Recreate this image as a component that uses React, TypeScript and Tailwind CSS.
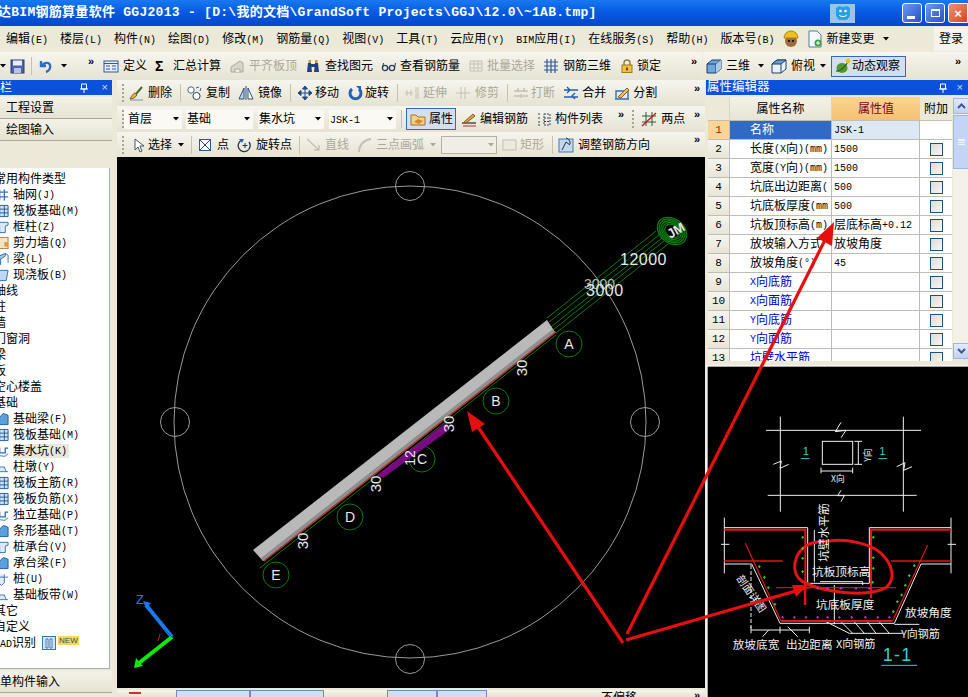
import React from "react";

const FONT = "font-['Liberation_Sans','Noto_Sans_CJK_SC',sans-serif]";

function Txt({ t }: { t: string }) {
  const parts = t.split(/([\x00-\x7f°]+)/).filter(Boolean);
  return (
    <>
      {parts.map((p, i) =>
        /^[\x00-\x7f°]+$/.test(p) ? (
          <span key={i} className="font-['Liberation_Mono',monospace] text-[10px] whitespace-pre">{p}</span>
        ) : (
          <span key={i}>{p}</span>
        )
      )}
    </>
  );
}

const icons: Record<string, React.ReactNode> = {
  save: <><rect x="2" y="2" width="13" height="13" fill="#4a63a8" stroke="#2a3c78" /><rect x="4" y="2.5" width="9" height="5" fill="#e8ecf6" /><rect x="5" y="10" width="7" height="5" fill="#b8c2dc" /></>,
  undo: <path d="M3 3v5h5M4 8c2-4 7-4 8-1s-1 6-4 7" fill="none" stroke="#2f6cc8" strokeWidth="2.4" />,
  define: <><rect x="1" y="3" width="14" height="11" fill="#e8eef8" stroke="#2a5a9c" /><path d="M1 5.5h14M3 8h4M3 11h4M9 8h4M9 11h4" stroke="#2a5a9c" /></>,
  align: <><path d="M2 14V9l9-6 3 2v9z" fill="#d8d6c8" stroke="#aca899" /><path d="M6 14v-3h5v3" fill="#efeee6" stroke="#aca899" /></>,
  bino: <><path d="M2 14l1-9h3l1 9zM9 14l1-9h3l1 9z" fill="#23407e" /><rect x="6" y="6" width="4" height="3" fill="#23407e" /><rect x="3.5" y="2" width="2.5" height="3" fill="#c89a30" /><rect x="10" y="2" width="2.5" height="3" fill="#c89a30" /></>,
  glass: <><circle cx="4" cy="10" r="2.6" fill="none" stroke="#2a3c58" strokeWidth="1.3" /><circle cx="11" cy="10" r="2.6" fill="none" stroke="#2a3c58" strokeWidth="1.3" /><path d="M6.5 10h2M1.5 10l1-5M13.5 10l1-5" stroke="#2a3c58" /></>,
  batch: <path d="M2 3h12v10H2zM2 6h12M2 10h12M6 3v10M10 3v10" fill="#eeece2" stroke="#c4c1b0" />,
  rebar: <path d="M1 4h14M1 8h14M1 12h14M4 1v14M8 1v14M12 1v14" stroke="#2b5aa0" strokeWidth="1.2" fill="none" />,
  lock: <><path d="M5 7V5a3 3 0 016 0v2" fill="none" stroke="#8a7a50" strokeWidth="1.4" /><rect x="3" y="7" width="10" height="7.5" fill="#f0c040" stroke="#a07818" /><rect x="7" y="9.5" width="2" height="3" fill="#80501a" /></>,
  cube: <><path d="M1 6l5-4h9v9l-5 4H1z" fill="#6fa8d8" stroke="#1e3e6c" /><path d="M1 6h9v9M10 6l5-4" fill="none" stroke="#1e3e6c" /><path d="M10 6l5-4v9l-5 4z" fill="#a8cce8" /></>,
  cube2: <><path d="M1 6l5-4h9v9l-5 4H1z" fill="#e8f0f8" stroke="#1e3e6c" /><path d="M1 6l5-4h9l-5 4z" fill="#6aa0d0" stroke="#1e3e6c" /><path d="M10 6v9" stroke="#1e3e6c" /></>,
  orbit: <><ellipse cx="7" cy="10" rx="5.5" ry="5" fill="#4c9a30" /><path d="M1 13c4 1 10-5 13-11" stroke="#2a5a18" fill="none" strokeWidth="1.2" /><circle cx="13" cy="3" r="2.4" fill="#e8c030" /></>,
  broom: <><path d="M2 14c2-4 4-6 5-6l2 2c-1 2-4 4-7 4z" fill="#e8b030" stroke="#786020" /><path d="M8 9l6-7" stroke="#486a28" strokeWidth="2" /><path d="M2 15h13" stroke="#7890b8" /></>,
  copy: <><circle cx="5" cy="5" r="3.2" fill="#fff" stroke="#567" /><circle cx="10.5" cy="11" r="3.6" fill="#fff" stroke="#345" /><path d="M10 3l3-1M14 6l1-3" stroke="#2860a0" /></>,
  mirror: <><path d="M1 14L6 3v11z" fill="#bcd4ec" stroke="#25507c" /><path d="M15 14L10 3v11z" fill="#fff" stroke="#25507c" /><path d="M8 1v14" stroke="#25507c" /></>,
  move: <path d="M8 1v14M1 8h14M8 1L5.5 4h5zM8 15l-2.5-3h5zM1 8l3-2.5v5zM15 8l-3-2.5v5z" fill="#234a80" stroke="#234a80" />,
  rotate: <><path d="M12 4a5.5 5.5 0 11-7 0" fill="none" stroke="#2460c0" strokeWidth="3" /><path d="M9 1h5v5z" fill="#2460c0" /></>,
  extend: <path d="M1 8h8M3 5v6M7 5v6M12 2v12M14 2v12" stroke="#c4c1b0" fill="none" />,
  trim: <path d="M1 8h14M6 2v12M10 2v12" stroke="#c4c1b0" fill="none" />,
  brk: <path d="M1 6h14M1 11h14M5 3v4M11 3v4M8 9v4" stroke="#c4c1b0" strokeWidth="1.4" fill="none" />,
  merge: <path d="M1 5h14M1 12h14M4 2l3 3-3 3M12 8l-3 3 3 3" stroke="#2060b0" strokeWidth="1.4" fill="none" />,
  split: <><path d="M1 14h14M2 14V6h12v8" stroke="#3070b8" strokeWidth="1.4" fill="none" /><path d="M4 12L13 3l2 2-8 8z" fill="#e8c070" stroke="#806020" /></>,
  attr: <><path d="M1 4h5l2 2h7v8H1z" fill="#f0d48c" stroke="#a07030" /><path d="M4 11l4-3 5 2-4 3z" fill="#d88820" /></>,
  pen: <><path d="M1 12h14" stroke="#000" /><path d="M3 11l9-8 2 2-9 7z" fill="#e0a040" stroke="#806020" /><path d="M2 15h13" stroke="#b03030" /></>,
  list: <path d="M2 3h3M2 7h3M2 11h3M2 14h3M8 3h6v11H8zM8 7h6M8 10.5h6" stroke="#345" fill="none" strokeDasharray="2 1" />,
  two: <><path d="M5 1v14M11 1v14" stroke="#2a5a40" /><path d="M1 5h14M1 11h14" stroke="#2a5a40" /><path d="M1 15L15 2" stroke="#c02020" strokeWidth="1.4" /></>,
  cursor: <path d="M5 2v11l3-3 2 5 2-1-2-5h4z" fill="#fff" stroke="#456" />,
  point: <><rect x="2.5" y="2.5" width="11" height="11" fill="#fff" stroke="#2a5a9c" /><path d="M3 3l10 10M13 3L3 13" stroke="#345" /></>,
  rotpt: <><path d="M12 5a6 6 0 11-7-2" fill="none" stroke="#234" strokeWidth="1.3" /><path d="M2 2l5 0-2 4z" fill="#2460c0" /><path d="M8 6v5M5.5 8.5h5" stroke="#234" /></>,
  line: <path d="M1 2l12 11M13 8v5H8" stroke="#c4c1b0" strokeWidth="1.4" fill="none" />,
  arc: <path d="M2 15C2 8 7 3 14 2" stroke="#c4c1b0" strokeWidth="2" fill="none" />,
  rect: <rect x="1" y="3" width="13" height="10" fill="#eceadf" stroke="#c4c1b0" />,
  adjust: <><rect x="1" y="2" width="14" height="13" fill="#c4d8ec" stroke="#4878a8" /><path d="M4 13l4-8 4 3" stroke="#234" fill="none" /><path d="M8 1a5 5 0 014 6" stroke="#234" fill="none" /></>,
};

function Ico({ n, className = "" }: { n: string; className?: string }) {
  return (
    <svg width="16" height="16" viewBox="0 0 16 16" className={"shrink-0 " + className}>
      {icons[n]}
    </svg>
  );
}

function Arrow({ grey }: { grey?: boolean }) {
  return (
    <svg width="6" height="4" viewBox="0 0 6 4" className="shrink-0">
      <path d="M0 0h6L3 3.5z" fill={grey ? "#aca899" : "#000"} />
    </svg>
  );
}

function Tool({ n, t, grey, className = "", gap = "gap-[4px]" }: { n: string; t: string; grey?: boolean; className?: string; gap?: string }) {
  return (
    <div className={"flex items-center shrink-0 whitespace-nowrap " + gap + " " + (grey ? "text-[#aca899] " : "text-black ") + className}>
      <Ico n={n} />
      <span>{t}</span>
    </div>
  );
}

const Sep = ({ className = "" }: { className?: string }) => <div className={"w-px h-[18px] bg-[#c5c2b0] shrink-0 " + className} />;
const More = ({ className = "" }: { className?: string }) => (
  <span className={"shrink-0 font-bold text-[11px] leading-none -translate-y-[5px] font-['Liberation_Sans'] " + className}>»</span>
);
const Handle = ({ className = "" }: { className?: string }) => <div className={"w-[2px] h-[18px] shrink-0 border-l-2 border-dotted border-[#a8a58f] " + className} />;

const rowBg = "bg-linear-to-b from-[#f6f5ee] to-[#e6e3d3]";

function Menu() {
  const items = ["编辑(E)", "楼层(L)", "构件(N)", "绘图(D)", "修改(M)", "钢筋量(Q)", "视图(V)", "工具(T)", "云应用(Y)", "BIM应用(I)", "在线服务(S)", "帮助(H)", "版本号(B)"];
  return (
    <div className="h-[26px] bg-[#ece9d8] flex items-center pl-[6px] gap-[12px] text-[12px] text-black">
      {items.map((m) => (
        <span key={m} className="whitespace-nowrap"><Txt t={m} /></span>
      ))}
      <svg width="18" height="18" viewBox="0 0 18 18" className="shrink-0 -ml-[4px]">
        <circle cx="9" cy="11" r="6" fill="#a06a40" />
        <path d="M2 8a7 7 0 0114 0z" fill="#f0c020" stroke="#b08010" />
        <circle cx="7" cy="11" r="1" fill="#000" /><circle cx="11" cy="11" r="1" fill="#000" />
      </svg>
      <div className="flex items-center gap-[3px] -ml-[5px] shrink-0">
        <svg width="16" height="18" viewBox="0 0 16 18">
          <path d="M2 1h8l4 4v12H2z" fill="#f4f8fc" stroke="#5878a8" />
          <circle cx="11" cy="13" r="3.5" fill="#40a040" />
          <path d="M9 13h4M11 11v4" stroke="#fff" />
        </svg>
        <span className="whitespace-nowrap">新建变更</span>
        <span className="ml-[6px]"><Arrow /></span>
      </div>
      <div className="ml-auto w-[34px] h-[24px] bg-[#f4f3ec] flex items-center justify-center shrink-0">登录</div>
    </div>
  );
}

const treeIcons: Record<string, React.ReactNode> = {
  hash: <path d="M2 4h12M2 9h12M5 1v12M10 1v12" stroke="#3a72b0" strokeWidth="1.4" fill="none" />,
  grid: <><path d="M1 1h13v12H1z" fill="#cfe0f2" stroke="#1f5a98" /><path d="M1 5h13M1 9h13M5 1v12M10 1v12" stroke="#1f5a98" /></>,
  post: <path d="M1 2h13v3l-3 1v7H5V6L1 5z" fill="#dfeaf6" stroke="#2f6aa8" />,
  wall: <><rect x="1" y="1" width="13" height="12" fill="#f4e4c4" stroke="#a88040" /><path d="M10 6h4v5h-4z" fill="#d89850" /></>,
  beam: <><path d="M2 5l9-4v3l-5 3v6H3z" fill="#a0c8ec" stroke="#2f6aa8" /><path d="M11 1l3 2v8" fill="none" stroke="#2f6aa8" /></>,
  slab: <path d="M3 2h11l-2 11H1z" fill="#bcd8f2" stroke="#2f6aa8" />,
  found: <path d="M2 13l2-7 5-5 5 2v10z" fill="#5aa0dc" stroke="#1f5a98" />,
  pit: <><path d="M1 4h4v5h6V4h3" fill="none" stroke="#2f6aa8" strokeWidth="1.4" /><path d="M2 11l8 2 4-3" stroke="#7aa8d8" fill="none" strokeWidth="1.5" /></>,
  pier: <><path d="M1 12h13M3 12l2-5h5l2 5" fill="#dfeaf6" stroke="#3a72b0" /></>,
  pile: <path d="M1 5h13M4 2v9l3 3 3-3V2" fill="#dfeaf6" stroke="#3a72b0" />,
};

const mainRows: { t: string; i?: string }[] = [
  { t: "常用构件类型" },
  { t: "轴网(J)", i: "hash" }, { t: "筏板基础(M)", i: "grid" }, { t: "框柱(Z)", i: "post" }, { t: "剪力墙(Q)", i: "wall" }, { t: "梁(L)", i: "beam" }, { t: "现浇板(B)", i: "slab" },
  { t: "轴线" }, { t: "柱" }, { t: "墙" }, { t: "门窗洞" }, { t: "梁" }, { t: "板" }, { t: "空心楼盖" }, { t: "基础" },
  { t: "基础梁(F)", i: "found" }, { t: "筏板基础(M)", i: "grid" }, { t: "集水坑(K)", i: "pit" }, { t: "柱墩(Y)", i: "pier" }, { t: "筏板主筋(R)", i: "grid" }, { t: "筏板负筋(X)", i: "grid" },
  { t: "独立基础(P)", i: "pit" }, { t: "条形基础(T)", i: "found" }, { t: "桩承台(V)", i: "post" }, { t: "承台梁(F)", i: "found" }, { t: "桩(U)", i: "pile" }, { t: "基础板带(W)", i: "pier" },
  { t: "其它" }, { t: "自定义" },
];

function LeftPanel() {
  return (
    <div className="w-[112px] shrink-0 flex flex-col bg-[#ece9d8] overflow-hidden">
      <div className="h-[15px] bg-[#0a52dc] text-white flex items-center text-[12px] pr-[4px]">
        <span>栏</span>
        <svg width="10" height="10" viewBox="0 0 10 10" className="ml-auto mr-[13px]"><path d="M2.5 1h5v5h-5zM1 6h8M5 6v4" stroke="#fff" fill="none" /></svg>
        <span className="text-[11px] leading-none font-['Liberation_Sans'] text-[#c8dcff]">×</span>
      </div>
      <div className="mt-[2px] h-[22px] border-b border-[#aca899] flex items-center pl-[6px] text-[12px] bg-linear-to-b from-[#f4f2e8] to-[#e6e3d3]">工程设置</div>
      <div className="h-[22px] border-b border-[#aca899] flex items-center pl-[6px] text-[12px] bg-linear-to-b from-[#f4f2e8] to-[#e6e3d3]">绘图输入</div>
      <div className="h-[27px]" />
      <div className="h-[501px] w-[110px] bg-white border-r border-b border-[#9fb0c4] pt-[3px] overflow-hidden">
        {mainRows.map((r, idx) => (
          <div key={idx} className="h-[16px] flex items-center text-[12px] whitespace-nowrap">
            {r.i ? (
              <>
                <svg width="14" height="14" viewBox="0 0 15 14" className="shrink-0 -ml-[5px]">
                  {treeIcons[r.i]}
                </svg>
                <span className={"ml-[4px] h-[14px] flex items-center pr-[2px] " + (r.t.startsWith("集水坑") ? "bg-[#eae8da]" : "")}><Txt t={r.t} /></span>
              </>
            ) : (
              <span className="-ml-[6px]"><Txt t={r.t} /></span>
            )}
          </div>
        ))}
        <div className="h-[16px] flex items-center text-[12px] whitespace-nowrap">
          <span className="-ml-[6px]"><Txt t="CAD识别" /></span>
          <svg width="14" height="14" viewBox="0 0 14 14" className="ml-[6px] shrink-0"><rect x="0.5" y="0.5" width="13" height="13" fill="#d0e4f4" stroke="#3878b0" /><path d="M4 3h2v9H4zM8 3h2v9H8z" fill="#fff" stroke="#3878b0" /></svg>
          <span className="ml-[2px] -mt-[6px] bg-[#ffd850] text-[#205080] text-[8px] leading-[9px] font-['Liberation_Sans'] px-[1px]">NEW</span>
        </div>
      </div>
      <div className="mt-[2px] h-[22px] border-b border-[#aca899] flex items-center text-[12px] bg-linear-to-b from-[#f4f2e8] to-[#e6e3d3]">单构件输入</div>
    </div>
  );
}

function Combo({ t, w, pad = "pl-[3px]" }: { t: string; w: string; pad?: string }) {
  return (
    <div className={"h-[19px] flex items-center justify-between bg-[#faf9f4] shrink-0 pr-[3px] " + pad + " " + w}>
      <span><Txt t={t} /></span>
      <Arrow />
    </div>
  );
}

function CenterToolbars() {
  return (
    <div className="flex flex-col text-[12px]">
      <div className={"h-[26px] flex items-center gap-[8px] pl-[5px] " + rowBg}>
        <Handle className="-mr-[4px]" />
        <Tool n="broom" t="删除" />
        <Sep className="-mr-[3px]" />
        <Tool n="copy" t="复制" />
        <Tool n="mirror" t="镜像" />
        <Sep className="-mr-[2px]" />
        <Tool n="move" t="移动" gap="gap-[2px]" />
        <Tool n="rotate" t="旋转" gap="gap-[2px]" />
        <Sep className="-mr-[2px]" />
        <Tool n="extend" t="延伸" grey gap="gap-[3px]" />
        <Tool n="trim" t="修剪" grey />
        <Sep className="-mr-[3px]" />
        <Tool n="brk" t="打断" grey gap="gap-[2px]" />
        <Tool n="merge" t="合并" gap="gap-[3px]" />
        <Tool n="split" t="分割" gap="gap-[3px]" />
        <More className="ml-auto mr-[5px]" />
      </div>
      <div className={"h-[26px] flex items-center pl-[5px] " + rowBg}>
        <Handle />
        <Combo t="首层" w="w-[58px]" pad="pl-[4px]" />
        <div className="w-[4px]" />
        <Combo t="基础" w="w-[67px]" pad="pl-[1px]" />
        <div className="w-[5px]" />
        <Combo t="集水坑" w="w-[66px]" pad="pl-[1px]" />
        <div className="w-[5px]" />
        <Combo t="JSK-1" w="w-[67px]" pad="pl-[1px]" />
        <Sep className="ml-[5px]" />
        <div className="ml-[4px] w-[50px] h-[22px] flex items-center pl-[3px] gap-[3px] border border-[#316ac5] bg-[#d4dfee] shrink-0">
          <Ico n="attr" />
          <span>属性</span>
        </div>
        <Tool n="pen" t="编辑钢筋" className="ml-[5px]" gap="gap-[3px]" />
        <Tool n="list" t="构件列表" className="ml-[8px]" gap="gap-[3px]" />
        <More className="ml-[15px]" />
        <div className="ml-[8px]"><Handle /></div>
        <Tool n="two" t="两点" className="ml-[7px]" />
        <More className="ml-auto mr-[5px]" />
      </div>
      <div className={"h-[25px] flex items-center pl-[5px] " + rowBg}>
        <Handle />
        <Tool n="cursor" t="选择" className="ml-[6px]" gap="gap-[2px]" />
        <span className="ml-[6px]"><Arrow /></span>
        <Sep className="ml-[7px]" />
        <Tool n="point" t="点" className="ml-[5px]" gap="gap-[4px]" />
        <Tool n="rotpt" t="旋转点" className="ml-[8px]" gap="gap-[3px]" />
        <Sep className="ml-[7px]" />
        <Tool n="line" t="直线" grey className="ml-[6px]" gap="gap-[3px]" />
        <Tool n="arc" t="三点画弧" grey className="ml-[8px]" gap="gap-[3px]" />
        <span className="ml-[6px]"><Arrow grey /></span>
        <div className="ml-[5px] w-[56px] h-[18px] bg-[#f0eee4] border border-[#b5b39f] flex items-center justify-end pr-[2px]"><Arrow grey /></div>
        <Tool n="rect" t="矩形" grey className="ml-[5px]" gap="gap-[2px]" />
        <Sep className="ml-[8px]" />
        <Tool n="adjust" t="调整钢筋方向" className="ml-[5px]" />
        <More className="ml-auto mr-[5px]" />
      </div>
    </div>
  );
}

function Canvas() {
  const green = "#0a7a10";
  const balls: [number, number, string][] = [[569, 344, "A"], [496, 401, "B"], [422, 459, "C"], [350, 517, "D"], [276, 575, "E"]];
  const thirty: [number, number][] = [[522, 368], [449, 424], [376, 484], [303, 541]];
  return (
    <svg width="588" height="531" viewBox="117 157 588 531" className="block bg-black shrink-0">
      <g fill="none" stroke="#9a9a9a">
        <circle cx="410" cy="422" r="236" />
        <circle cx="410" cy="186" r="14.5" />
        <circle cx="175" cy="422" r="14.5" />
        <circle cx="645" cy="422" r="14.5" />
        <circle cx="410" cy="659" r="14.5" />
      </g>
      <g stroke={green} fill="none">
        <path d="M551 327L662 238M549 322L659 235M553 330L664 241M547 318L656 231M556 333L668 244" />
        <path d="M260 568L556 335" />
        {[[16, 12], [14, 10.5], [12, 9], [10, 7.5], [8, 6]].map(([a, b], i) => (
          <ellipse key={i} cx="672" cy="231" rx={a} ry={b} transform="rotate(38 672 231)" strokeWidth="1.4" />
        ))}
        {balls.map(([x, y]) => <circle key={x} cx={x} cy={y} r="13" strokeWidth="1" />)}
      </g>
      <polygon points="547,320 555,332 263,561 253,550" fill="#b9b9b9" />
      <polygon points="553,329 555,332 263,561 261,558" fill="#8e8e8e" />
      <path d="M556 332L264 561" stroke="#b03a30" strokeWidth="1.5" />
      <polygon points="447,422 449,430 383,478 377,475" fill="#7a0a84" />
      <g fill="#e8e8e8" className="font-['Liberation_Sans']">
        {balls.map(([x, y, c]) => <text key={c} x={x} y={y + 5} fontSize="14" textAnchor="middle">{c}</text>)}
        {thirty.map(([x, y], i) => <text key={i} transform={`rotate(-90 ${x} ${y})`} x={x} y={y + 5} fontSize="15" textAnchor="middle">30</text>)}
        <text x="620" y="265" fontSize="16" letterSpacing="0.5">12000</text>
        <text x="586" y="296" fontSize="16" letterSpacing="0.5">3000</text>
        <text x="584" y="289" fontSize="14" opacity="0.75">3000</text>
        <text transform="rotate(-90 413 458)" x="413" y="460" fontSize="14" textAnchor="middle">12</text>
        <text x="667" y="237" fontSize="13" fontWeight="bold" transform="rotate(-30 672 232)">JM</text>
      </g>
      <g>
        <path d="M172 637L146 605" stroke="#1a78f0" strokeWidth="4" />
        <path d="M143 601l8 2-5 5z" fill="#1a78f0" />
        <path d="M172 637L139 663" stroke="#10e810" strokeWidth="4" />
        <path d="M134 668l2-10 7 8z" fill="#10e810" />
        <path d="M172 637l-8-8M158 641l2-7" stroke="#c02020" />
        <text x="136" y="604" fontSize="13" fill="#1a78f0" className="font-['Liberation_Sans']">Z</text>
      </g>
    </svg>
  );
}

function BottomBar() {
  return (
    <div className={"mt-[2px] h-[7px] flex overflow-hidden text-[12px] " + rowBg}>
      <div className="flex items-start pl-[6px] gap-[4px] w-[588px]">
        <svg width="16" height="12" viewBox="0 0 16 12" className="shrink-0 ml-[4px]"><path d="M2 3h12" stroke="#d03030" strokeWidth="2" /></svg>
        <span className="w-[24px]" />
        <div className="w-[74px] h-[20px] border border-[#6890c8] bg-[#d4dfee] shrink-0 ml-[1px]" />
        <div className="w-[74px] h-[20px] border border-[#6890c8] bg-[#d4dfee] shrink-0 -ml-[4px]" />
        <span className="w-[55px]" />
        <div className="w-[50px] h-[20px] border border-[#6890c8] bg-[#d4dfee] shrink-0" />
        <div className="w-[50px] h-[20px] border border-[#6890c8] bg-[#d4dfee] shrink-0 -ml-[4px]" />
        <span className="w-[106px]" />
        <span className="whitespace-nowrap -mt-[1px]">不偏移</span>
        <More className="ml-auto mr-[5px] !translate-y-0" />
      </div>
    </div>
  );
}

const propRows: [string, string][] = [
  ["名称", "JSK-1"], ["长度(X向)(mm)", "1500"], ["宽度(Y向)(mm)", "1500"], ["坑底出边距离(", "500"], ["坑底板厚度(mm", "500"],
  ["坑板顶标高(m)", "层底标高+0.12"], ["放坡输入方式", "放坡角度"], ["放坡角度(°)", "45"], ["X向底筋", ""], ["X向面筋", ""], ["Y向底筋", ""], ["Y向面筋", ""], ["坑壁水平筋", ""],
];

function PropTable() {
  return (
    <div className="h-[270px] flex pt-[2px] pl-[2px] bg-[#ece9d8] text-[12px] overflow-hidden">
      <div className="w-[244px] shrink-0 bg-white overflow-hidden h-[264px]">
        <div className="h-[24px] flex border-b border-[#c2bfae] text-center">
          <div className="w-[22px] bg-[#ece9d8] border-r border-[#d8d5c4]" />
          <div className="w-[102px] bg-linear-to-b from-[#f4f2e8] to-[#e8e5d6] flex items-center justify-center border-r border-[#d8d5c4]">属性名称</div>
          <div className="w-[88px] bg-linear-to-b from-[#fbd68e] to-[#f4c070] flex items-center justify-center text-[#7a0030]">属性值</div>
          <div className="w-[32px] bg-[#ece9d8] flex items-center justify-center">附加</div>
        </div>
        {propRows.map(([k, v], i) => {
          const first = i === 0;
          const blue = i >= 8;
          return (
            <div key={i} className="h-[19px] flex border-b border-[#bdbdb5] shrink-0">
              <div className={"w-[22px] flex items-center justify-center border-r border-[#bdbdb5] shrink-0 " + (first ? "bg-[#fbd596] text-[#803000]" : "bg-linear-to-b from-[#f6f5ee] to-[#e8e5d6]")}>
                <span className="font-['Liberation_Mono'] text-[11px]">{i + 1}</span>
              </div>
              <div className={"w-[102px] flex items-center pl-[20px] border-r border-[#bdbdb5] overflow-hidden whitespace-nowrap shrink-0 " + (first ? "bg-[#316ac5] text-white" : blue ? "text-[#0000c8]" : "")}>
                <Txt t={k} />
              </div>
              <div className={"w-[88px] flex items-center pl-[2px] border-r border-[#bdbdb5] overflow-hidden whitespace-nowrap shrink-0 " + (first ? "bg-[#dde8f5]" : "")}>
                <Txt t={v} />
              </div>
              <div className="w-[32px] flex items-center justify-center shrink-0">
                {!first && <div className="w-[13px] h-[13px] border border-[#1c5180] bg-linear-to-br from-[#dcdcd4] to-[#f8f8f4]" />}
              </div>
            </div>
          );
        })}
      </div>
      <div className="w-[16px] ml-[1px] mt-[1px] h-[261px] bg-[#f3f1e8] flex flex-col shrink-0">
        <div className="h-[16px] bg-linear-to-b from-[#e4ecfa] to-[#c0d0f2] border border-[#9db6e4] flex items-center justify-center">
          <svg width="9" height="6" viewBox="0 0 9 6"><path d="M1 5l3.5-3.5L8 5" stroke="#3c5a98" strokeWidth="2" fill="none" /></svg>
        </div>
        <div className="mt-[1px] h-[54px] bg-[#c4d4f4] border border-[#9db6e4] flex items-center justify-center">
          <div className="w-[7px] h-[6px] border-y border-[#eef3fc] bg-[linear-gradient(#eef3fc_1px,transparent_1px)] bg-[length:100%_2px]" />
        </div>
        <div className="mt-auto h-[16px] bg-linear-to-b from-[#e4ecfa] to-[#c0d0f2] border border-[#9db6e4] flex items-center justify-center">
          <svg width="9" height="6" viewBox="0 0 9 6"><path d="M1 1l3.5 3.5L8 1" stroke="#3c5a98" strokeWidth="2" fill="none" /></svg>
        </div>
      </div>
    </div>
  );
}

function Detail() {
  const w = "#f0f0f0";
  const r = "#e21414";
  const gp: [number, number][] = [[290, 517], [290, 550], [290, 580], [290, 620], [502, 517], [502, 578], [502, 610], [500, 652], [160, 605], [175, 637], [187, 668], [207, 718], [625, 602], [610, 632], [598, 661], [587, 690], [574, 710], [562, 740]];
  const mp: [number, number][] = [[230, 757], [265, 757], [300, 757], [335, 757], [365, 757], [400, 757], [437, 757], [478, 757], [515, 757], [550, 757], [335, 670], [365, 670], [405, 670], [450, 670], [490, 670]];
  return (
    <svg width="262" height="332" viewBox="0 0 786 996" className="block bg-black shrink-0">
      <rect x="0" y="0" width="786" height="5" fill="#f4f4f0" />
      <rect x="0" y="0" width="5" height="996" fill="#f4f4f0" />
      <g stroke={w} strokeWidth="3" fill="none">
        <path d="M180 196H645M185 391H632M223 155V440M592 155V440" />
        <path d="M405 172L388 200L420 196L405 218M405 376L395 392L415 392L405 410M202 298L226 288L222 310L248 298M572 305L597 293L593 316L618 305" />
        <rect x="349" y="229" width="91" height="69" />
        <path d="M457 229V298M445 229H468M445 298H468M345 318H440M345 308V325M440 308V325" />
        <path d="M55 458V625M55 488H305V655H490V488H735M735 458V625M55 597H137L222 775H565L645 597H735M565 778H640" />
        <path d="M325 495V650M135 795H310M135 785V805M222 785V805M310 785V805" />
        <path d="M135 600V790" strokeDasharray="12 6" />
        <path d="M350 765L430 805M400 765L440 805M440 765L475 805M480 765L510 805M515 765L550 805M430 805H590M188 795L170 815M245 785L275 815M342 650H470V660M385 660V778" />
        <path d="M45 538H70M725 538H750" />
      </g>
      <g stroke={r} fill="none">
        <path d="M55 494H298V720M495 700V494H735M225 768H560" strokeWidth="6" />
        <path d="M55 588H230M555 588H735" strokeWidth="5" />
        <path d="M210 668H570" strokeWidth="4" stroke="#b81818" />
        <path d="M118 535L225 768M665 540L560 768" strokeWidth="3.5" />
        <path d="M310 537C262 560 250 625 290 650C345 680 480 700 540 668C572 640 558 596 525 565C495 535 420 522 375 527C350 528 325 532 310 537Z" strokeWidth="9" />
      </g>
      <g stroke="#30e030" strokeWidth="3">
        {gp.map(([x, y], i) => <path key={i} d={`M${x - 4} ${y}h8M${x} ${y - 4}v8`} />)}
      </g>
      <g stroke="#d030d0" strokeWidth="3">
        {mp.map(([x, y], i) => <path key={i} d={`M${x - 4} ${y}h8M${x} ${y - 4}v8`} />)}
      </g>
      <g fontSize="33" fill={w} className="font-['Noto_Sans_CJK_SC',sans-serif]">
        <text x="318" y="634" fontSize="35">坑板顶标高</text>
        <text x="330" y="733" fontSize="35">坑底板厚度</text>
        <text x="597" y="756" fontSize="35">放坡角度</text>
        <text x="585" y="818" fontSize="33">Y向钢筋</text>
        <text x="80" y="851" fontSize="35">放坡底宽</text>
        <text x="240" y="851" fontSize="35">出边距离</text>
        <text x="390" y="848" fontSize="33">X向钢筋</text>
        <text x="375" y="350" fontSize="26">X向</text>
        <text transform="rotate(-90 495 290)" x="495" y="290" fontSize="26">Y向</text>
        <text transform="rotate(-90 365 590)" x="365" y="590" fontSize="35">坑壁水平筋</text>
        <text transform="rotate(55 90 640)" x="90" y="640" fontSize="32">剖面详图</text>
      </g>
      <g fill="#30d0d0" className="font-['Liberation_Sans',sans-serif]">
        <text x="290" y="270" fontSize="34">1</text>
        <text x="520" y="270" fontSize="34">1</text>
        <text x="530" y="888" fontSize="54" letterSpacing="4">1-1</text>
      </g>
      <path d="M285 281H311M517 281H543M526 901H633" stroke="#30d0d0" strokeWidth="3" />
      <path d="M296 650V720M278 668H312" stroke={r} strokeWidth="5" />
    </svg>
  );
}

function Overlay() {
  const c = "#e60f0f";
  return (
    <svg width="968" height="697" viewBox="0 0 968 697" className="absolute left-0 top-0 pointer-events-none">
      <path d="M623 643L476 424" stroke={c} strokeWidth="3.2" fill="none" />
      <polygon points="467,411 485,424 472,432" fill={c} />
      <path d="M627 634L827 236" stroke={c} strokeWidth="3.2" fill="none" />
      <polygon points="834,222 832,246 817,238" fill={c} />
      <path d="M626 640L806 588" stroke={c} strokeWidth="3.2" fill="none" />
      <polygon points="808,585 792,585 796,597" fill={c} />
    </svg>
  );
}

export default function App() {
  return (
    <div className={"relative w-[968px] h-[697px] overflow-hidden bg-[#ece9d8] text-[12px] text-black " + FONT}>
      <div className="h-[26px] bg-linear-to-b from-[#1a78f0] via-[#0558e2] to-[#0448c8] flex items-center">
        <span className="text-white text-[13px] font-bold whitespace-pre font-['Liberation_Mono','Noto_Sans_CJK_SC',monospace] -ml-[2px] tracking-[0.28px]">
          达BIM钢筋算量软件 GGJ2013 - [D:\我的文档\GrandSoft Projects\GGJ\12.0\~1AB.tmp]
        </span>
        <div className="ml-auto w-[25px] h-[19px] bg-[#9cc4e8] flex items-center justify-center shrink-0">
          <svg width="18" height="16" viewBox="0 0 18 16"><path d="M2 3l3-2 4 1 4-1 3 2v8l-3 4H5l-3-4z" fill="#28a0e8" /><circle cx="6.5" cy="6" r="1.3" fill="#fff" /><circle cx="11.5" cy="6" r="1.3" fill="#fff" /><path d="M5 10c2 2 6 2 8 0" stroke="#fff" fill="none" /></svg>
        </div>
        <div className="ml-[47px] w-[20px] h-[20px] rounded-[3px] bg-linear-to-br from-[#6a9af0] to-[#2a50c8] border border-white flex items-end pb-[3px] pl-[4px] shrink-0"><div className="w-[8px] h-[3px] bg-white" /></div>
        <div className="ml-[3px] w-[20px] h-[20px] rounded-[3px] bg-linear-to-br from-[#6a9af0] to-[#2a50c8] border border-white flex items-center justify-center shrink-0"><div className="w-[9px] h-[8px] border border-white border-t-2" /></div>
        <div className="ml-[3px] w-[20px] h-[20px] rounded-l-[3px] bg-linear-to-br from-[#f09070] to-[#d84020] border border-white flex items-center justify-center text-white font-bold text-[13px] leading-none font-['Liberation_Sans'] shrink-0">×</div>
      </div>
      <Menu />
      <div className="h-[28px] flex text-[12px]">
        <div className={"w-[100px] flex items-center shrink-0 " + rowBg}>
          <Arrow />
          <Ico n="save" className="ml-[3px]" />
          <Sep className="ml-[6px]" />
          <Ico n="undo" className="ml-[6px]" />
          <span className="ml-[7px]"><Arrow /></span>
          <More className="ml-[21px]" />
        </div>
        <div className={"w-[602px] flex items-center gap-[8px] pl-[3px] shrink-0 " + rowBg}>
          <Tool n="define" t="定义" />
          <div className="flex items-center gap-[6px] shrink-0 whitespace-nowrap"><span className="font-bold text-[14px] leading-none w-[12px] font-['Liberation_Sans']">Σ</span><span>汇总计算</span></div>
          <Tool n="align" t="平齐板顶" grey />
          <Tool n="bino" t="查找图元" />
          <Tool n="glass" t="查看钢筋量" gap="gap-[3px]" />
          <Tool n="batch" t="批量选择" grey gap="gap-[3px]" />
          <Tool n="rebar" t="钢筋三维" />
          <Tool n="lock" t="锁定" gap="gap-[2px]" />
          <More className="ml-auto mr-[5px]" />
        </div>
        <div className={"flex-1 flex items-center pl-[3px] ml-[1px] " + rowBg}>
          <Tool n="cube" t="三维" />
          <span className="ml-[8px]"><Arrow /></span>
          <Tool n="cube2" t="俯视" className="ml-[7px]" />
          <span className="ml-[5px]"><Arrow /></span>
          <div className="ml-[5px] w-[75px] h-[21px] border border-[#316ac5] bg-[#d4dfee] flex items-center pl-[3px] gap-[1px] shrink-0 whitespace-nowrap">
            <Ico n="orbit" />
            <span>动态观察</span>
          </div>
          <More className="ml-auto mr-[7px]" />
        </div>
      </div>
      <div className="flex h-[617px]">
        <LeftPanel />
        <div className="w-[5px] shrink-0" />
        <div className="w-[588px] shrink-0 flex flex-col">
          <CenterToolbars />
          <Canvas />
          <BottomBar />
        </div>
        <div className="w-[1px] shrink-0" />
        <div className="w-[262px] shrink-0 flex flex-col">
          <div className="h-[15px] bg-[#0a52dc] text-white flex items-center text-[12.5px] pl-[1px]">
            <span>属性编辑器</span>
            <svg width="10" height="10" viewBox="0 0 10 10" className="ml-auto mr-[9px]"><path d="M2.5 1h5v5h-5zM1 6h8M5 6v4" stroke="#fff" fill="none" /></svg>
            <span className="text-[11px] leading-none font-['Liberation_Sans'] text-[#c8dcff] mr-[5px]">×</span>
          </div>
          <PropTable />
          <Detail />
        </div>
      </div>
      <Overlay />
    </div>
  );
}
